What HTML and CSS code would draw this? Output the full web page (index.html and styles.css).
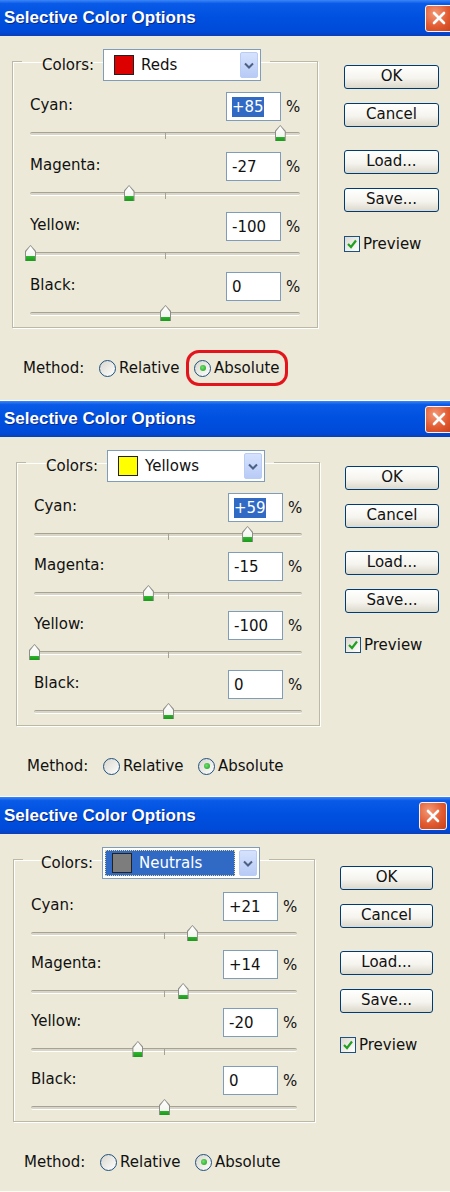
FILE: index.html
```html
<!DOCTYPE html>
<html>

<head>
    <title>Selective Color Options</title>
    <link rel="stylesheet" href="styles.css">
</head>

<body>

    <!-- reds -->
    <div class="dialog dialog-reds">
        <div class="titlebar">
            <span>Selective Color Options</span>
            <span class="close"><svg width="14" height="14" viewBox="0 0 14 14"><path d="M2 2L12 12M12 2L2 12" stroke="#fff" stroke-width="2.6" stroke-linecap="round"/></svg></span>
        </div>
        <div class="body">
            <div class="left">
                <fieldset class="group">
                    <legend>
                        <span>Colors:</span>
                        <span class="combo">
                            <span class="combo-value"><span class="swatch red"></span>Reds</span>
                            <span class="combo-arrow"><svg width="10" height="7" viewBox="0 0 10 7"><path d="M1 1.5L5 5.5L9 1.5" fill="none" stroke="#4d6185" stroke-width="2"/></svg></span>
                        </span>
                    </legend>
                    <div class="field">
                        <div class="row"><span class="label">Cyan:</span><span class="value"><span class="sel">+85</span></span><span class="pct">%</span></div>
                        <div class="slider"><div class="track"></div><div class="thumb" style="left: 92.5%"></div></div>
                    </div>
                    <div class="field">
                        <div class="row"><span class="label">Magenta:</span><span class="value">-27</span><span class="pct">%</span></div>
                        <div class="slider"><div class="track"></div><div class="thumb" style="left: 36.5%"></div></div>
                    </div>
                    <div class="field">
                        <div class="row"><span class="label">Yellow:</span><span class="value">-100</span><span class="pct">%</span></div>
                        <div class="slider"><div class="track"></div><div class="thumb" style="left: 0%"></div></div>
                    </div>
                    <div class="field">
                        <div class="row"><span class="label">Black:</span><span class="value">0</span><span class="pct">%</span></div>
                        <div class="slider"><div class="track"></div><div class="thumb" style="left: 50%"></div></div>
                    </div>
                </fieldset>
                <div class="method">
                    <span class="method-label">Method:</span>
                    <span class="option option-first"><span class="radio"></span>Relative</span>
                    <span class="option marked"><span class="radio checked"></span>Absolute</span>
                </div>
            </div>
            <div class="right">
                <div class="btn">OK</div>
                <div class="btn">Cancel</div>
                <div class="btn spaced">Load...</div>
                <div class="btn">Save...</div>
                <div class="preview spaced"><span class="check"><svg width="12" height="12" viewBox="0 0 12 12"><path d="M2 6L5 9L10 2.5" fill="none" stroke="#21a121" stroke-width="2.2"/></svg></span>Preview</div>
            </div>
        </div>
    </div>

    <!-- yellows -->
    <div class="dialog dialog-yellows">
        <div class="titlebar">
            <span>Selective Color Options</span>
            <span class="close"><svg width="14" height="14" viewBox="0 0 14 14"><path d="M2 2L12 12M12 2L2 12" stroke="#fff" stroke-width="2.6" stroke-linecap="round"/></svg></span>
        </div>
        <div class="body">
            <div class="left">
                <fieldset class="group">
                    <legend>
                        <span>Colors:</span>
                        <span class="combo">
                            <span class="combo-value"><span class="swatch yellow"></span>Yellows</span>
                            <span class="combo-arrow"><svg width="10" height="7" viewBox="0 0 10 7"><path d="M1 1.5L5 5.5L9 1.5" fill="none" stroke="#4d6185" stroke-width="2"/></svg></span>
                        </span>
                    </legend>
                    <div class="field">
                        <div class="row"><span class="label">Cyan:</span><span class="value"><span class="sel">+59</span></span><span class="pct">%</span></div>
                        <div class="slider"><div class="track"></div><div class="thumb" style="left: 79.5%"></div></div>
                    </div>
                    <div class="field">
                        <div class="row"><span class="label">Magenta:</span><span class="value">-15</span><span class="pct">%</span></div>
                        <div class="slider"><div class="track"></div><div class="thumb" style="left: 42.5%"></div></div>
                    </div>
                    <div class="field">
                        <div class="row"><span class="label">Yellow:</span><span class="value">-100</span><span class="pct">%</span></div>
                        <div class="slider"><div class="track"></div><div class="thumb" style="left: 0%"></div></div>
                    </div>
                    <div class="field">
                        <div class="row"><span class="label">Black:</span><span class="value">0</span><span class="pct">%</span></div>
                        <div class="slider"><div class="track"></div><div class="thumb" style="left: 50%"></div></div>
                    </div>
                </fieldset>
                <div class="method">
                    <span class="method-label">Method:</span>
                    <span class="option option-first"><span class="radio"></span>Relative</span>
                    <span class="option"><span class="radio checked"></span>Absolute</span>
                </div>
            </div>
            <div class="right">
                <div class="btn">OK</div>
                <div class="btn">Cancel</div>
                <div class="btn spaced">Load...</div>
                <div class="btn">Save...</div>
                <div class="preview spaced"><span class="check"><svg width="12" height="12" viewBox="0 0 12 12"><path d="M2 6L5 9L10 2.5" fill="none" stroke="#21a121" stroke-width="2.2"/></svg></span>Preview</div>
            </div>
        </div>
    </div>

    <!-- neutrals -->
    <div class="dialog dialog-neutrals">
        <div class="titlebar">
            <span>Selective Color Options</span>
            <span class="close"><svg width="14" height="14" viewBox="0 0 14 14"><path d="M2 2L12 12M12 2L2 12" stroke="#fff" stroke-width="2.6" stroke-linecap="round"/></svg></span>
        </div>
        <div class="body">
            <div class="left">
                <fieldset class="group">
                    <legend>
                        <span>Colors:</span>
                        <span class="combo">
                            <span class="combo-value selected"><span class="swatch gray"></span>Neutrals</span>
                            <span class="combo-arrow"><svg width="10" height="7" viewBox="0 0 10 7"><path d="M1 1.5L5 5.5L9 1.5" fill="none" stroke="#4d6185" stroke-width="2"/></svg></span>
                        </span>
                    </legend>
                    <div class="field">
                        <div class="row"><span class="label">Cyan:</span><span class="value">+21</span><span class="pct">%</span></div>
                        <div class="slider"><div class="track"></div><div class="thumb" style="left: 60.5%"></div></div>
                    </div>
                    <div class="field">
                        <div class="row"><span class="label">Magenta:</span><span class="value">+14</span><span class="pct">%</span></div>
                        <div class="slider"><div class="track"></div><div class="thumb" style="left: 57%"></div></div>
                    </div>
                    <div class="field">
                        <div class="row"><span class="label">Yellow:</span><span class="value">-20</span><span class="pct">%</span></div>
                        <div class="slider"><div class="track"></div><div class="thumb" style="left: 40%"></div></div>
                    </div>
                    <div class="field">
                        <div class="row"><span class="label">Black:</span><span class="value">0</span><span class="pct">%</span></div>
                        <div class="slider"><div class="track"></div><div class="thumb" style="left: 50%"></div></div>
                    </div>
                </fieldset>
                <div class="method">
                    <span class="method-label">Method:</span>
                    <span class="option option-first"><span class="radio"></span>Relative</span>
                    <span class="option"><span class="radio checked"></span>Absolute</span>
                </div>
            </div>
            <div class="right">
                <div class="btn">OK</div>
                <div class="btn">Cancel</div>
                <div class="btn spaced">Load...</div>
                <div class="btn">Save...</div>
                <div class="preview spaced"><span class="check"><svg width="12" height="12" viewBox="0 0 12 12"><path d="M2 6L5 9L10 2.5" fill="none" stroke="#21a121" stroke-width="2.2"/></svg></span>Preview</div>
            </div>
        </div>
    </div>

</body>

</html>
```

FILE: styles.css
```css
body {
    margin: 0;
    background: #ece9d8;
    font-family: "DejaVu Sans", Tahoma, sans-serif;
    font-size: 15px;
    color: #111;
}

.dialog {
    overflow: hidden;
    box-sizing: border-box;
    border-bottom: 1px solid #fbfaf5;
}

.dialog-reds {
    height: 401px;
}

.dialog-yellows {
    height: 396px;
}

.dialog-neutrals {
    height: 395px;
}

/* title bar */

.titlebar {
    height: 36px;
    display: flex;
    align-items: center;
    justify-content: space-between;
    padding-left: 4px;
    background: linear-gradient(#3b86f7 0, #0a5ae8 10%, #0050df 50%, #004ad8 88%, #0a3fb8 100%);
    color: #fff;
    font: bold 17px "Liberation Sans", Arial, sans-serif;
    text-shadow: 1px 1px 0 #0b2a8a;
}

.close {
    width: 28px;
    height: 27px;
    box-sizing: border-box;
    margin-right: -3px;
    border: 1px solid #f4f4f4;
    border-radius: 3px;
    background: radial-gradient(circle at 35% 30%, #f39a78, #e15a30 55%, #c6421a);
    display: grid;
    place-items: center;
}

.dialog-neutrals .titlebar {
    height: 37px;
}

.dialog-neutrals .close {
    margin-right: 3px;
    height: 28px;
}

/* body */

.body {
    display: flex;
    padding: 5px 0 0 12px;
}

.dialog-yellows .body {
    padding-left: 16px;
}

.dialog-neutrals .body {
    padding-left: 13px;
}

.left {
    width: 306px;
}

.dialog-yellows .left {
    width: 304px;
}

.dialog-neutrals .left {
    width: 302px;
}

.group {
    margin: 0;
    padding: 0 17px 2px 17px;
    min-width: 0;
    border: 1px solid #bcb8a6;
    box-shadow: 1px 1px 0 #fff, inset 1px 1px 0 #fff;
}

.group legend {
    display: flex;
    align-items: center;
    padding: 8px 9px 0 20px;
    margin-left: -8px;
}

.dialog-neutrals .group legend {
    padding-left: 18px;
}

.combo {
    display: flex;
    align-items: center;
    width: 158px;
    height: 32px;
    margin-left: 9px;
    padding: 2px;
    box-sizing: border-box;
    border: 1px solid #7f9db9;
    background: #fff;
}

.combo-value {
    flex: 1;
    display: flex;
    align-items: center;
    gap: 7px;
    height: 100%;
    padding-left: 8px;
}

.combo-value.selected {
    margin-right: 4px;
    padding-left: 7px;
    background: #316ac5;
    color: #fff;
    outline: 1px dotted #e8d890;
    outline-offset: -1px;
}

.swatch {
    width: 20px;
    height: 20px;
    box-sizing: border-box;
    border: 1px solid #222;
}

.red {
    background: #dd0000;
}

.yellow {
    background: #ffff00;
}

.gray {
    background: #7d7d7d;
}

.combo-arrow {
    width: 18px;
    height: 100%;
    box-sizing: border-box;
    border: 1px solid #b9ccf5;
    border-radius: 2px;
    background: linear-gradient(#d6e2fd, #b8cbf6);
    display: grid;
    place-items: center;
}

/* sliders */

.field + .field {
    margin-top: 7px;
}

.dialog-yellows .field + .field {
    margin-top: 6px;
}

.dialog-neutrals .field + .field {
    margin-top: 5px;
}

.field:first-of-type {
    margin-top: 11px;
}

.dialog-neutrals .field:first-of-type {
    margin-top: 13px;
}

.row {
    display: flex;
    align-items: center;
    height: 29px;
}

.label {
    flex: 1;
    margin-top: -3px;
}

.value {
    width: 55px;
    height: 29px;
    box-sizing: border-box;
    padding-left: 5px;
    border: 1px solid #7f9db9;
    background: #fff;
    display: flex;
    align-items: center;
}

.sel {
    background: #316ac5;
    color: #fff;
    padding: 1px 0;
}

.pct {
    width: 14px;
    margin-left: 5px;
}

.slider {
    position: relative;
    height: 24px;
    padding-top: 11px;
    box-sizing: border-box;
}

.track {
    position: relative;
    height: 2px;
    border-top: 1px solid #a6a394;
    border-bottom: 1px solid #fff;
    border-radius: 2px;
    background: #d9d6c8;
}

.track::after {
    content: "";
    position: absolute;
    left: 50%;
    top: 0;
    width: 1px;
    height: 6px;
    background: #a6a394;
}

.thumb {
    position: absolute;
    top: 4px;
    width: 11px;
    height: 16px;
    margin-left: -5px;
    background: #8e8e88;
    clip-path: polygon(50% 0, 100% 38%, 100% 100%, 0 100%, 0 38%);
}

.thumb::before {
    content: "";
    position: absolute;
    inset: 1px 1px 0 1px;
    background: linear-gradient(#fff 0, #f4f4f0 70%, #2fb52f 70%, #1a9a1a 100%);
    clip-path: polygon(50% 0, 100% 38%, 100% 100%, 0 100%, 0 38%);
}

/* method */

.method {
    display: flex;
    align-items: center;
    height: 20px;
    margin-top: 30px;
    padding-left: 11px;
}

.method-label {
    width: 76px;
}

.option {
    display: inline-flex;
    align-items: center;
    gap: 3px;
    height: 20px;
}

.option-first {
    width: 95px;
}

.option.marked {
    outline: 3px solid #e3141b;
    outline-offset: 5px;
    border-radius: 5px;
}

.radio {
    width: 17px;
    height: 17px;
    box-sizing: border-box;
    border: 1px solid #1c5180;
    border-radius: 50%;
    background: linear-gradient(135deg, #d9d6cc, #fff);
    display: grid;
    place-items: center;
}

.radio.checked::after {
    content: "";
    width: 6px;
    height: 6px;
    border-radius: 50%;
    background: radial-gradient(circle at 40% 40%, #6ee06e, #1b9e1b);
}

/* buttons */

.right {
    display: flex;
    flex-direction: column;
    width: 95px;
    margin-left: 26px;
    padding-top: 24px;
}

.dialog-yellows .right {
    width: 94px;
    margin-left: 25px;
}

.dialog-neutrals .right {
    width: 93px;
    margin-left: 25px;
    padding-top: 27px;
}

.btn {
    height: 24px;
    box-sizing: border-box;
    border: 1px solid #003c74;
    border-radius: 3px;
    background: linear-gradient(#fff, #f5f4ee 55%, #dcd8cc);
    text-align: center;
    line-height: 21px;
}

.btn + .btn {
    margin-top: 14px;
}

.right .spaced {
    margin-top: 23px;
}

.preview {
    display: flex;
    align-items: center;
    gap: 3px;
}

.check {
    width: 16px;
    height: 16px;
    box-sizing: border-box;
    border: 1px solid #1c5180;
    background: linear-gradient(135deg, #dcd9cf, #fff);
    display: grid;
    place-items: center;
}
```
